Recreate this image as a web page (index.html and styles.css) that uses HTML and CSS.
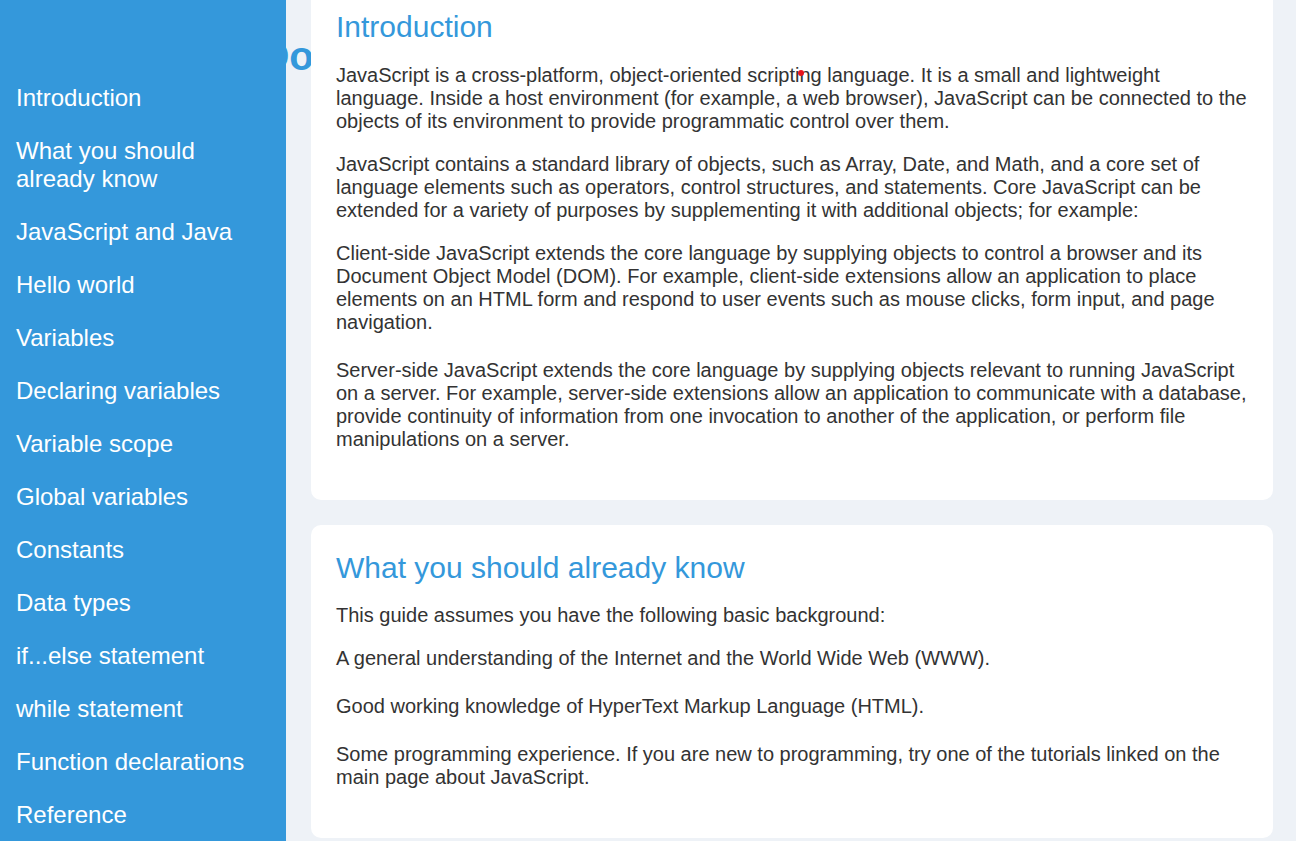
FILE: index.html
```html
<!DOCTYPE html>
<html lang="en">
<head>
<meta charset="utf-8">
<title>JavaScript Documentation</title>
<link rel="stylesheet" href="styles.css">
</head>
<body>
<div class="layout">
  <nav class="sidebar" id="navbar">
    <h1 class="brand">JavaScript Documentation</h1>
    <ul class="nav-list">
      <li><a class="nav-link" href="#Introduction">Introduction</a></li>
      <li><a class="nav-link" href="#What_you_should_already_know">What you should already know</a></li>
      <li><a class="nav-link" href="#JavaScript_and_Java">JavaScript and Java</a></li>
      <li><a class="nav-link" href="#Hello_world">Hello world</a></li>
      <li><a class="nav-link" href="#Variables">Variables</a></li>
      <li><a class="nav-link" href="#Declaring_variables">Declaring variables</a></li>
      <li><a class="nav-link" href="#Variable_scope">Variable scope</a></li>
      <li><a class="nav-link" href="#Global_variables">Global variables</a></li>
      <li><a class="nav-link" href="#Constants">Constants</a></li>
      <li><a class="nav-link" href="#Data_types">Data types</a></li>
      <li><a class="nav-link" href="#if...else_statement">if...else statement</a></li>
      <li><a class="nav-link" href="#while_statement">while statement</a></li>
      <li><a class="nav-link" href="#Function_declarations">Function declarations</a></li>
      <li><a class="nav-link" href="#Reference">Reference</a></li>
    </ul>
  </nav>
  <main class="content" id="main-doc">
    <section class="card" id="Introduction">
      <span class="cursor-dot"></span>
      <h2 class="card-title">Introduction</h2>
      <p class="card-text">JavaScript is a cross-platform, object-oriented scripting language. It is a small and lightweight language. Inside a host environment (for example, a web browser), JavaScript can be connected to the objects of its environment to provide programmatic control over them.</p>
      <p class="card-text">JavaScript contains a standard library of objects, such as Array, Date, and Math, and a core set of language elements such as operators, control structures, and statements. Core JavaScript can be extended for a variety of purposes by supplementing it with additional objects; for example:</p>
      <ul class="card-list">
        <li>Client-side JavaScript extends the core language by supplying objects to control a browser and its Document Object Model (DOM). For example, client-side extensions allow an application to place elements on an HTML form and respond to user events such as mouse clicks, form input, and page navigation.</li>
        <li>Server-side JavaScript extends the core language by supplying objects relevant to running JavaScript on a server. For example, server-side extensions allow an application to communicate with a database, provide continuity of information from one invocation to another of the application, or perform file manipulations on a server.</li>
      </ul>
    </section>
    <section class="card" id="What_you_should_already_know">
      <h2 class="card-title">What you should already know</h2>
      <p class="card-text">This guide assumes you have the following basic background:</p>
      <ul class="card-list">
        <li>A general understanding of the Internet and the World Wide Web (WWW).</li>
        <li>Good working knowledge of HyperText Markup Language (HTML).</li>
        <li>Some programming experience. If you are new to programming, try one of the tutorials linked on the main page about JavaScript.</li>
      </ul>
    </section>
  </main>
</div>
</body>
</html>
```

FILE: styles.css
```css
html, body {
  margin: 0;
  padding: 0;
}

body {
  font-family: "Liberation Sans", Arial, sans-serif;
  background: #eef2f7;
  color: #333;
  overflow: hidden;
}

.layout {
  display: flex;
  align-items: flex-start;
}

.sidebar {
  width: 286px;
  flex-shrink: 0;
  min-height: 100vh;
  background: #3498db;
  box-sizing: border-box;
}

.brand {
  margin: 0;
  width: 311px;
  height: 71px;
  overflow: hidden;
  box-sizing: border-box;
  padding: 33px 0 0 47px;
  font-size: 40px;
  line-height: 46px;
  font-weight: bold;
  color: #3498db;
  white-space: nowrap;
}

.nav-list {
  list-style: none;
  margin: 0;
  padding: 0;
}

.nav-link {
  display: block;
  padding: 12.5px 16px;
  font-size: 24px;
  line-height: 28px;
  color: #fff;
  text-decoration: none;
}

.content {
  flex: 1;
  min-width: 0;
  margin-top: -16px;
  padding: 0 23px 0 25px;
}

.card {
  position: relative;
  background: #fff;
  border-radius: 10px;
  padding: 26px 25px 24px;
  margin-bottom: 25px;
}

.card-title {
  margin: 0 0 19px;
  font-size: 30px;
  line-height: 34.5px;
  font-weight: normal;
  color: #3498db;
}

.card-text {
  margin: 0 0 20px;
  font-size: 20px;
  line-height: 23px;
}

.card-list {
  list-style: none;
  margin: 0;
  padding: 0;
  font-size: 20px;
  line-height: 23px;
}

.card-list li {
  margin-bottom: 25px;
}

.cursor-dot {
  position: absolute;
  left: 487px;
  top: 86px;
  width: 6px;
  height: 6px;
  border-radius: 50%;
  background: #e8141c;
}
```
